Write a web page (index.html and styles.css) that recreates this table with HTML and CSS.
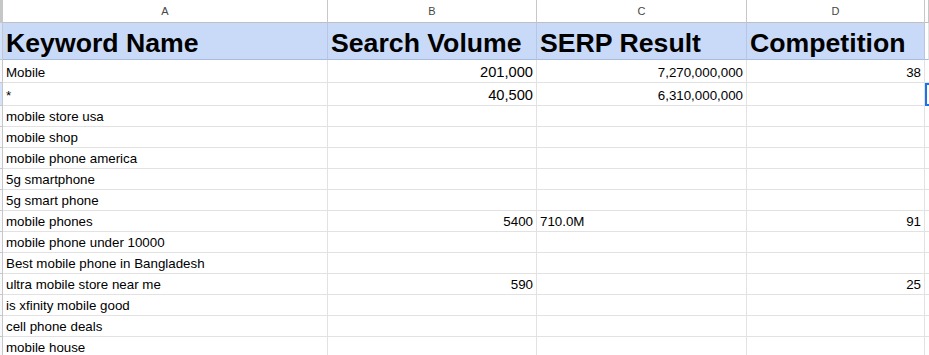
FILE: index.html
```html
<!DOCTYPE html>
<html>
<head>
<meta charset="utf-8">
<link rel="stylesheet" href="styles.css">
</head>
<body>
<div class="viewport">
<table class="grid">
  <thead>
    <tr class="colhead">
      <th class="rh rh-corner"></th>
      <th class="c-a">A</th>
      <th class="c-b">B</th>
      <th class="c-c">C</th>
      <th class="c-d">D</th>
      <th class="c-e"></th>
    </tr>
  </thead>
  <tbody>
    <tr class="title">
      <td class="rh rh-sel"></td>
      <td>Keyword Name</td>
      <td>Search Volume</td>
      <td>SERP Result</td>
      <td>Competition</td>
      <td class="e"></td>
    </tr>
    <tr class="r-big">
      <td class="rh"></td>
      <td>Mobile</td>
      <td class="num big">201,000</td>
      <td class="num">7,270,000,000</td>
      <td class="num">38</td>
      <td class="e"></td>
    </tr>
    <tr class="r-big">
      <td class="rh rh-sel"></td>
      <td>*</td>
      <td class="num big">40,500</td>
      <td class="num">6,310,000,000</td>
      <td></td>
      <td class="e active"></td>
    </tr>
    <tr><td class="rh"></td><td>mobile store usa</td><td></td><td></td><td></td><td class="e"></td></tr>
    <tr><td class="rh"></td><td>mobile shop</td><td></td><td></td><td></td><td class="e"></td></tr>
    <tr><td class="rh"></td><td>mobile phone america</td><td></td><td></td><td></td><td class="e"></td></tr>
    <tr><td class="rh"></td><td>5g smartphone</td><td></td><td></td><td></td><td class="e"></td></tr>
    <tr><td class="rh"></td><td>5g smart phone</td><td></td><td></td><td></td><td class="e"></td></tr>
    <tr><td class="rh"></td><td>mobile phones</td><td class="num">5400</td><td>710.0M</td><td class="num">91</td><td class="e"></td></tr>
    <tr><td class="rh"></td><td>mobile phone under 10000</td><td></td><td></td><td></td><td class="e"></td></tr>
    <tr><td class="rh"></td><td>Best mobile phone in Bangladesh</td><td></td><td></td><td></td><td class="e"></td></tr>
    <tr><td class="rh"></td><td>ultra mobile store near me</td><td class="num">590</td><td></td><td class="num">25</td><td class="e"></td></tr>
    <tr><td class="rh"></td><td>is xfinity mobile good</td><td></td><td></td><td></td><td class="e"></td></tr>
    <tr><td class="rh"></td><td>cell phone deals</td><td></td><td></td><td></td><td class="e"></td></tr>
    <tr><td class="rh"></td><td>mobile house</td><td></td><td></td><td></td><td class="e"></td></tr>
  </tbody>
</table>
</div>
</body>
</html>
```

FILE: styles.css
```css
html, body {
  margin: 0;
  padding: 0;
  background: #ffffff;
  overflow: hidden;
}

.viewport {
  width: 929px;
  height: 355px;
  overflow: hidden;
}

.grid {
  table-layout: fixed;
  border-collapse: separate;
  border-spacing: 0;
  width: 929px;
  font-family: "Liberation Sans", Arial, sans-serif;
  font-size: 13.33px;
  color: #000000;
}

.grid th,
.grid td {
  box-sizing: border-box;
  padding: 0 3px 2px 3px;
  border-right: 1px solid #e2e2e3;
  border-bottom: 1px solid #e2e2e3;
  white-space: nowrap;
  overflow: hidden;
  vertical-align: bottom;
  text-align: left;
  font-weight: normal;
}

/* column header row */
.colhead th {
  height: 23px;
  font-size: 11px;
  color: #444746;
  text-align: center;
  vertical-align: middle;
  padding: 0;
  border-right: 1px solid #c7c7c7;
  border-bottom: 1px solid #c0c0c0;
  background: #ffffff;
}

.c-a { width: 325px; }
.c-b { width: 209px; }
.c-c { width: 210px; }
.c-d { width: 178px; }
.c-e { width: 4px; }

.grid .rh {
  width: 3px;
  padding: 0;
  background: #f8f9fa;
  border-right: 1px solid #c7c7c7;
  border-bottom: 1px solid #c7c7c7;
}

.grid .rh-corner {
  background: #c4c7c5;
}

.grid .rh-sel {
  background: #d3e3fd;
}

/* title row */
.title td {
  height: 37px;
  background: #c9daf8;
  font-size: 26.67px;
  font-weight: bold;
  padding-bottom: 0;
  border-bottom: 1px solid #a8bbdc;
  border-right: 1px solid #b7c7e3;
}

.title td.e {
  background: #ffffff;
  border-right: 1px solid #e2e2e3;
}

.r-big td {
  height: 23px;
}

tbody tr td {
  height: 21px;
}

.grid .e {
  padding: 0;
  border-right: none;
}

.num {
  text-align: right !important;
}

.big {
  font-size: 14.67px;
}

.grid td.active {
  border-left: 2px solid #1a73e8;
  border-top: 2px solid #1a73e8;
  border-bottom: 2px solid #1a73e8;
}
```
